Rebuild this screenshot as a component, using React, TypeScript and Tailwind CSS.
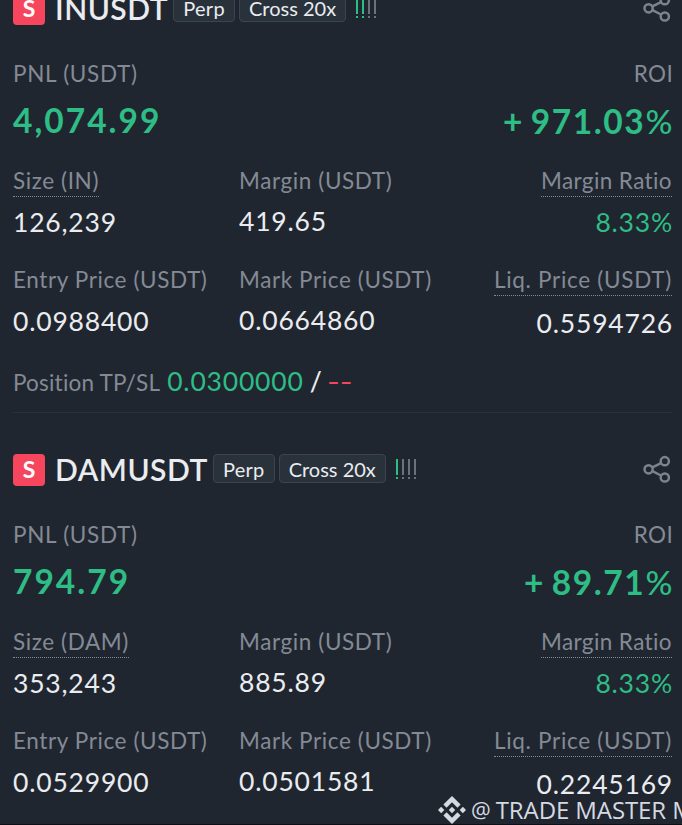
import clsx from "clsx";

type Position = {
    symbol: string;
    base: string;
    risk: number;
    pnl: string;
    roi: string;
    size: string;
    margin: string;
    entry: string;
    mark: string;
    liq: string;
    takeProfit?: string;
};

const positions: Position[] = [
    {
        symbol: "INUSDT",
        base: "IN",
        risk: 2,
        pnl: "4,074.99",
        roi: "+ 971.03",
        size: "126,239",
        margin: "419.65",
        entry: "0.0988400",
        mark: "0.0664860",
        liq: "0.5594726",
        takeProfit: "0.0300000",
    },
    {
        symbol: "DAMUSDT",
        base: "DAM",
        risk: 1,
        pnl: "794.79",
        roi: "+ 89.71",
        size: "353,243",
        margin: "885.89",
        entry: "0.0529900",
        mark: "0.0501581",
        liq: "0.2245169",
    },
];

function ShareIcon() {
    return (
        <svg className="h-8 w-8 shrink-0" viewBox="0 0 32 32" fill="none" stroke="#7d838e" strokeWidth="2.5">
            <circle cx="8.6" cy="15.3" r="4.1" />
            <circle cx="24.8" cy="7.2" r="4.1" />
            <circle cx="24.8" cy="23.5" r="4.1" />
            <path d="M12.4 13.4l8.6-4.3M12.4 17.2l8.6 4.3" />
        </svg>
    );
}

function RiskBars({ level }: { level: number }) {
    return (
        <div className="-mt-[2px] ml-[10px] flex gap-1">
            {[0, 1, 2, 3].map((i) => (
                <div key={i} className={clsx("flex w-[2px] flex-col gap-[2px]", i < level ? "text-[#2ebd85]" : "text-[#6c727d]")}>
                    <span className="h-[16px] bg-current" />
                    <span className="h-[2px] bg-current" />
                </div>
            ))}
        </div>
    );
}

function Tag({ children, className }: { children: string; className: string }) {
    return (
        <span className={clsx("-mt-[3px] flex h-[29px] items-center justify-center rounded border border-[#3d444f] bg-[#29313b] text-[20px] whitespace-nowrap", className)}>
            {children}
        </span>
    );
}

type FieldProps = {
    label: string;
    value: string;
    hint?: boolean;
    end?: boolean;
    labelClass?: string;
    valueClass?: string;
};

function Field({ label, value, hint, end, labelClass = "tracking-[0.6px]", valueClass = "mt-2" }: FieldProps) {
    return (
        <div className={clsx("flex flex-col whitespace-nowrap", end ? "items-end" : "items-start")}>
            <span className={clsx("h-[33px] border-b-[1.5px] text-[22.5px] leading-[33px] text-[#848a95]", labelClass, hint ? "border-dotted border-[#848a95]" : "border-transparent")}>
                {label}
            </span>
            <span className={clsx("text-[26.5px] leading-[34px] tracking-[0.8px]", end && "-mr-px", valueClass)}>{value}</span>
        </div>
    );
}

function PositionCard({ item }: { item: Position }) {
    return (
        <article className="h-[461px] pr-[10px] pl-[13px]">
            <header className="flex h-8 items-center">
                <span className="flex h-8 w-8 items-center justify-center rounded bg-[#f6465d] pb-px text-[23px] font-bold text-white">S</span>
                <h2 className="-mt-[3px] ml-[10px] text-[30px] leading-8 font-semibold tracking-[0.5px]">{item.symbol}</h2>
                <Tag className="ml-[5px] w-[62px] tracking-[0.3px]">Perp</Tag>
                <Tag className="ml-1 w-[107px]">Cross 20x</Tag>
                <RiskBars level={item.risk} />
                <div className="ml-auto">
                    <ShareIcon />
                </div>
            </header>

            <div className="mt-[33px] flex justify-between text-[22.5px] leading-8 tracking-[0.7px] text-[#848a95]">
                <span>PNL (USDT)</span>
                <span className="-mr-px tracking-[0.3px]">ROI</span>
            </div>
            <div className="mt-[10px] flex justify-between text-[33.5px] leading-10 font-bold text-[#2ebd85]">
                <span className="tracking-[2px]">{item.pnl}</span>
                <span className="-mr-[2px] mt-px tracking-[1.6px] [word-spacing:-3px]">
                    {item.roi}
                    <span className="font-medium">%</span>
                </span>
            </div>

            <div className="mt-[23px] grid grid-cols-[226px_1fr_auto]">
                <Field label={`Size (${item.base})`} value={item.size} hint />
                <Field label="Margin (USDT)" value={item.margin} valueClass="mt-[7px]" />
                <Field label="Margin Ratio" value="8.33%" hint end labelClass="tracking-[0.4px]" valueClass="mt-2 text-[#2ebd85]" />
            </div>
            <div className="mt-6 grid grid-cols-[226px_1fr_auto]">
                <Field label="Entry Price (USDT)" value={item.entry} />
                <Field label="Mark Price (USDT)" value={item.mark} valueClass="mt-[7px]" />
                <Field label="Liq. Price (USDT)" value={item.liq} hint end labelClass="tracking-[0.7px]" valueClass="mt-[10px] -mb-[2px]" />
            </div>

            {item.takeProfit && (
                <div className="mt-[26px] flex h-[49px] items-baseline border-b border-[#2b313b] text-[26.5px] leading-[34px]">
                    <span className="text-[22.5px] tracking-[0.2px] text-[#848a95]">Position TP/SL</span>
                    <span className="ml-[7px] tracking-[0.8px] text-[#2ebd85]">{item.takeProfit}</span>
                    <span className="ml-[6px] font-medium">/</span>
                    <span className="ml-[5px] origin-left scale-x-[1.3] text-[#f6465d]">--</span>
                </div>
            )}
        </article>
    );
}

function Watermark() {
    return (
        <div className="absolute top-[795px] left-[438px] flex h-[30px] items-center font-['Open_Sans',sans-serif] text-[24px] whitespace-nowrap text-[#d5d9e0]">
            <svg className="h-7 w-7" viewBox="0 0 126.6 126.6" fill="currentColor">
                <path d="M38.7 53.2 63.3 28.6l24.6 24.6 14.3-14.3L63.3 0 24.4 38.9zM0 63.3 14.3 49l14.3 14.3-14.3 14.3zM38.7 73.4 63.3 98l24.6-24.6 14.3 14.3-38.9 38.9-38.9-38.9zM98 63.3 112.3 49l14.3 14.3-14.3 14.3zM77.8 63.3 63.3 48.8 48.8 63.3l14.5 14.5z" />
            </svg>
            <span className="-mt-[2px] ml-[5px] text-[22px]">@</span>
            <span className="-mt-px ml-[5px] tracking-[-0.1px]">TRADE MASTER M</span>
        </div>
    );
}

export default function App() {
    return (
        <main className="relative h-[825px] w-[682px] overflow-hidden border-b border-[#0d1016] bg-[#20262f] font-[Lato,sans-serif] text-[#eaecef]">
            <div className="-mt-[7px]">
                {positions.map((item) => (
                    <PositionCard key={item.symbol} item={item} />
                ))}
            </div>
            <Watermark />
        </main>
    );
}
